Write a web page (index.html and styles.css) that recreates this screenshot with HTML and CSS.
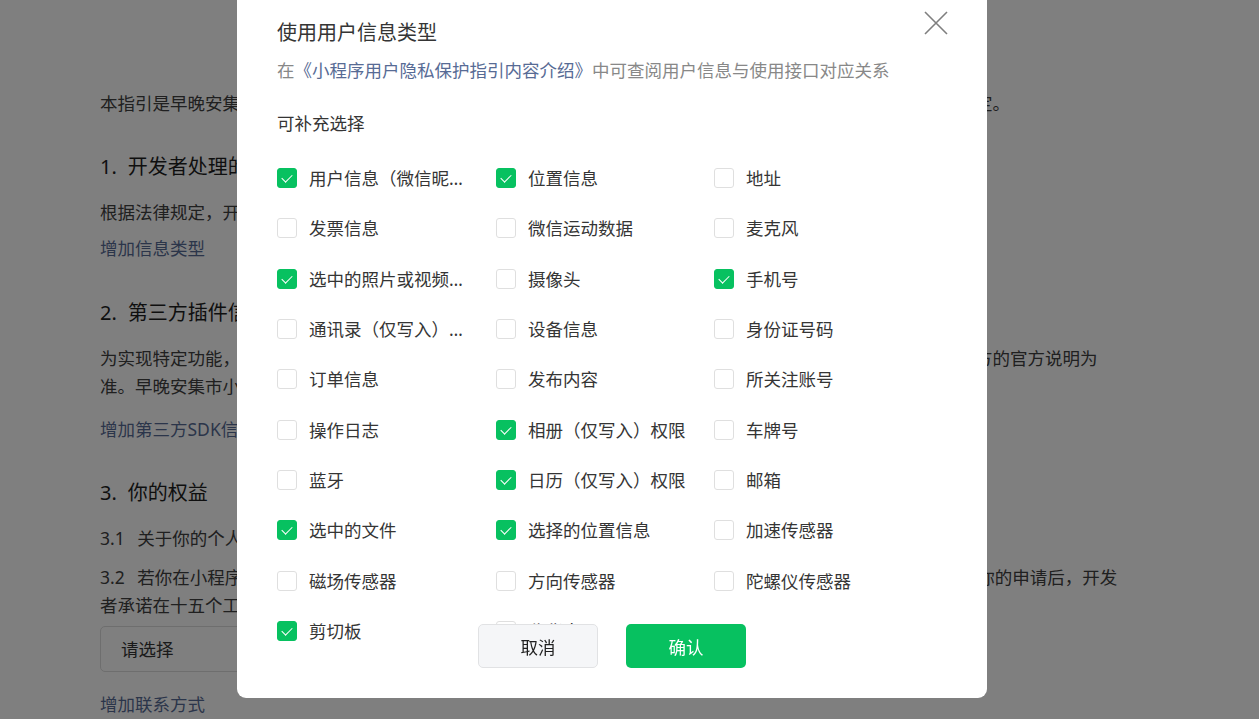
FILE: index.html
```html
<!DOCTYPE html>
<html lang="zh-CN">
<head>
  <meta charset="UTF-8" />
  <meta name="viewport" content="width=device-width, initial-scale=1.0"/>
  <title>用户隐私保护指引</title>
  <link rel="stylesheet" href="styles.css">
</head>
<body>
  <div class="page">
    <p class="text intro">本指引是早晚安集市小程序开发者广州市白云区某某某电子商务商行（以下简称开发者）为处理你的个人信息而制定。</p>

    <h2 class="section-title"><span class="num">1.</span>开发者处理的信息</h2>
    <p class="text law-text">根据法律规定，开发者仅处理实现小程序功能所必要的信息。</p>
    <a class="link info-link">增加信息类型</a>

    <h2 class="section-title plugin-title"><span class="num">2.</span>第三方插件信息</h2>
    <p class="text plugin-text">为实现特定功能，开发者可能会接入由第三方提供的插件。第三方插件可能收集和处理你的个人信息，以插件提供方的官方说明为准。早晚安集市小程序开发者不会超出实现功能所必需的范围使用你的信息。</p>
    <a class="link sdk-link">增加第三方SDK信息</a>

    <h2 class="section-title rights-title"><span class="num">3.</span>你的权益</h2>
    <p class="text rights-1"><span class="sub-num">3.1</span>关于你的个人信息，你可以通过以下方式与开发者联系，行使查阅、复制、更正、删除等法定权利。</p>
    <p class="text rights-2"><span class="sub-num">3.2</span>若你在小程序中注册了账号，你可以通过以下方式与开发者联系，申请注销你在小程序中使用的账号。在受理你的申请后，开发者承诺在十五个工作日内完成核查和处理，并按照法律法规要求处理你的相关信息。</p>
    <div class="select">请选择</div>
    <a class="link contact-link">增加联系方式</a>
  </div>

  <div class="mask"></div>

  <div class="dialog">
    <svg class="dialog-close" width="24" height="24" viewBox="0 0 24 24">
      <path d="M1 1 L23 23 M23 1 L1 23" stroke="#7f7f7f" stroke-width="1.6" fill="none"/>
    </svg>

    <h3 class="dialog-title">使用用户信息类型</h3>
    <p class="dialog-desc">在<a class="desc-link">《小程序用户隐私保护指引内容介绍》</a>中可查阅用户信息与使用接口对应关系</p>
    <p class="group-label">可补充选择</p>

    <div class="option-list">
      <label class="option"><span class="checkbox checked"></span><span class="option-text">用户信息（微信昵称、头像）</span></label>
      <label class="option"><span class="checkbox checked"></span><span class="option-text">位置信息</span></label>
      <label class="option"><span class="checkbox"></span><span class="option-text">地址</span></label>

      <label class="option"><span class="checkbox"></span><span class="option-text">发票信息</span></label>
      <label class="option"><span class="checkbox"></span><span class="option-text">微信运动数据</span></label>
      <label class="option"><span class="checkbox"></span><span class="option-text">麦克风</span></label>

      <label class="option"><span class="checkbox checked"></span><span class="option-text">选中的照片或视频信息</span></label>
      <label class="option"><span class="checkbox"></span><span class="option-text">摄像头</span></label>
      <label class="option"><span class="checkbox checked"></span><span class="option-text">手机号</span></label>

      <label class="option"><span class="checkbox"></span><span class="option-text">通讯录（仅写入）权限</span></label>
      <label class="option"><span class="checkbox"></span><span class="option-text">设备信息</span></label>
      <label class="option"><span class="checkbox"></span><span class="option-text">身份证号码</span></label>

      <label class="option"><span class="checkbox"></span><span class="option-text">订单信息</span></label>
      <label class="option"><span class="checkbox"></span><span class="option-text">发布内容</span></label>
      <label class="option"><span class="checkbox"></span><span class="option-text">所关注账号</span></label>

      <label class="option"><span class="checkbox"></span><span class="option-text">操作日志</span></label>
      <label class="option"><span class="checkbox checked"></span><span class="option-text">相册（仅写入）权限</span></label>
      <label class="option"><span class="checkbox"></span><span class="option-text">车牌号</span></label>

      <label class="option"><span class="checkbox"></span><span class="option-text">蓝牙</span></label>
      <label class="option"><span class="checkbox checked"></span><span class="option-text">日历（仅写入）权限</span></label>
      <label class="option"><span class="checkbox"></span><span class="option-text">邮箱</span></label>

      <label class="option"><span class="checkbox checked"></span><span class="option-text">选中的文件</span></label>
      <label class="option"><span class="checkbox checked"></span><span class="option-text">选择的位置信息</span></label>
      <label class="option"><span class="checkbox"></span><span class="option-text">加速传感器</span></label>

      <label class="option"><span class="checkbox"></span><span class="option-text">磁场传感器</span></label>
      <label class="option"><span class="checkbox"></span><span class="option-text">方向传感器</span></label>
      <label class="option"><span class="checkbox"></span><span class="option-text">陀螺仪传感器</span></label>

      <label class="option"><span class="checkbox checked"></span><span class="option-text">剪切板</span></label>
      <label class="option"><span class="checkbox"></span><span class="option-text">收货人</span></label>
    </div>

    <div class="dialog-footer">
      <button class="btn btn-default">取消</button>
      <button class="btn btn-primary">确认</button>
    </div>
  </div>
</body>
</html>
```

FILE: styles.css
```css
body {
  margin: 0;
  font-family: "Noto Sans", "Noto Sans CJK SC", sans-serif;
  font-size: 17.5px;
  color: #353535;
  background: #fff;
  overflow: hidden;
}

p, h2, h3 {
  margin: 0;
}

/* page behind the mask */
.page {
  width: 1022px;
  padding: 89px 0 0 100px;
}

.text {
  line-height: 28px;
  color: #404040;
}

.section-title {
  font-size: 20px;
  font-weight: 400;
  line-height: 30px;
  margin-top: 35px;
  color: #1e1e1e;
}

.num {
  margin-right: 11px;
}

.sub-num {
  margin-right: 12.5px;
}

.link {
  display: block;
  line-height: 28px;
  color: #576b95;
  text-decoration: none;
}

.law-text { margin-top: 16px; }
.info-link { margin-top: 8px; }
.plugin-title { margin-top: 36px; }
.plugin-text { margin-top: 16px; }
.sdk-link { margin-top: 15px; }
.rights-title { margin-top: 35px; }
.rights-1 { margin-top: 16px; }
.rights-2 { margin-top: 11px; }
.contact-link { margin-top: 18px; }

.select {
  box-sizing: border-box;
  width: 440px;
  height: 46px;
  margin-top: 7px;
  padding-left: 20px;
  line-height: 44px;
  border: 1px solid #dcdcdc;
  border-radius: 5px;
  color: #353535;
}

.mask {
  position: fixed;
  inset: 0;
  background: rgba(0, 0, 0, 0.5);
}

/* dialog */
.dialog {
  position: fixed;
  left: 237px;
  top: -20px;
  width: 750px;
  height: 718px;
  box-sizing: border-box;
  padding: 39px 40px 0;
  background: #fff;
  border-radius: 9px;
  overflow: hidden;
}

.dialog-close {
  position: absolute;
  top: 31px;
  right: 39px;
  width: 24px;
  height: 24px;
}

.dialog-title {
  font-size: 20px;
  font-weight: 400;
  line-height: 28px;
  color: #353535;
}

.dialog-desc {
  margin-top: 9px;
  line-height: 28px;
  color: #888;
}

.desc-link {
  color: #576b95;
}

.group-label {
  margin-top: 25px;
  line-height: 28px;
  color: #353535;
}

.option-list {
  display: grid;
  grid-template-columns: 219px 218px 219px;
  grid-auto-rows: 50.33px;
  margin-top: 16px;
}

.option {
  display: flex;
  align-items: center;
  gap: 12px;
  color: #353535;
}

.checkbox {
  box-sizing: border-box;
  flex: none;
  width: 20px;
  height: 20px;
  border: 1px solid #dfdfdf;
  border-radius: 3px;
  background: #fff;
  position: relative;
}

.checkbox.checked {
  border-color: #07c160;
  background: #07c160;
}

.checkbox.checked::after {
  content: '';
  position: absolute;
  left: 6px;
  top: 3px;
  width: 5px;
  height: 9px;
  border: solid #fff;
  border-width: 0 1.5px 1.5px 0;
  transform: rotate(45deg);
}

.option-text {
  max-width: 160px;
  line-height: 28px;
  white-space: nowrap;
  overflow: hidden;
  text-overflow: ellipsis;
}

.dialog-footer {
  position: absolute;
  left: 0;
  right: 0;
  bottom: 30px;
  display: flex;
  justify-content: center;
  gap: 28px;
}

.btn {
  width: 120px;
  height: 44px;
  border-radius: 5px;
  font-family: inherit;
  font-size: 17.5px;
  cursor: pointer;
}

.btn-default {
  background: #f5f6f8;
  border: 1px solid #e1e2e4;
  color: #1f1f1f;
}

.btn-primary {
  background: #07c160;
  border: none;
  color: #fff;
}
```
